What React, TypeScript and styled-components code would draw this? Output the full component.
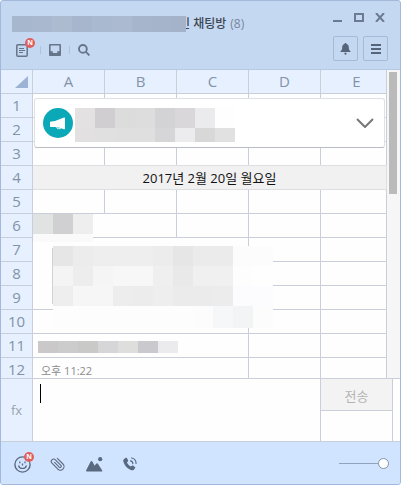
import React from "react";
import styled, { createGlobalStyle } from "styled-components";

const line = "#c8cfd8";

const GlobalStyle = createGlobalStyle`
  * { box-sizing: border-box; }
  body { margin: 0; font-family: "Open Sans", "Noto Sans CJK KR", sans-serif; }
  button { font: inherit; padding: 0; margin: 0; border: 0; background: none; color: inherit; }
`;

const Window = styled.main`
  height: 100vh;
  min-height: 320px;
  display: flex;
  flex-direction: column;
  border: 1px solid #a3b9dc;
  border-radius: 3px;
  background: #c5d8f1;
  overflow: hidden;
`;

const Header = styled.header`
  flex: none;
  height: 69px;
  padding: 7px 12px 0 11px;
  display: flex;
  justify-content: space-between;
  border-bottom: 1px solid #b7c9e2;
`;

const HeaderSide = styled.div<{ $end?: boolean }>`
  display: flex;
  flex-direction: column;
  align-items: ${(p) => (p.$end ? "flex-end" : "flex-start")};
  gap: ${(p) => (p.$end ? "10px" : "3px")};
  padding-top: ${(p) => (p.$end ? "0" : "5px")};
`;

const Title = styled.h1`
  margin: 0;
  height: 22px;
  display: flex;
  align-items: center;
  font-size: 12px;
  line-height: 22px;
  font-weight: 500;
  color: #3c4654;
  white-space: pre;
`;

const TitleMask = styled.span`
  position: relative;
  margin-right: -7px;
`;

const Count = styled.span`
  margin-left: 4px;
  font-weight: 400;
  color: #77869b;
`;

const Mosaic = styled.span<{ $columns: string; $rows: string }>`
  display: grid;
  width: max-content;
  grid-template-columns: ${(p) => p.$columns};
  grid-template-rows: ${(p) => p.$rows};
`;

const Tile = styled.span<{ $color: string }>`
  background: ${(p) => p.$color};
`;

const Tools = styled.div`
  display: flex;
  align-items: center;
  height: 24px;
`;

const ToolButton = styled.button<{ $flagged?: boolean }>`
  position: relative;
  width: ${(p) => (p.$flagged ? "28px" : "29px")};
  height: 24px;
  padding-right: ${(p) => (p.$flagged ? "8px" : "0")};
  display: flex;
  align-items: center;
  justify-content: center;
  color: #66758a;
`;

const Divider = styled.span`
  width: 1px;
  height: 8px;
  margin-right: -1px;
  background: #b0c2da;
`;

const Badge = styled.span`
  position: absolute;
  top: 0;
  right: 5px;
  width: 10px;
  height: 10px;
  border-radius: 50%;
  background: #e0605e;
  color: #ffffff;
  font-size: 7px;
  line-height: 10px;
  font-weight: 700;
  text-align: center;
`;

const WindowControls = styled.div`
  display: flex;
  gap: 5px;
  height: 18px;
`;

const ControlButton = styled.button`
  width: 16px;
  height: 18px;
  display: flex;
  align-items: center;
  justify-content: center;
  color: #6b7b92;
`;

const BoxButtons = styled.div`
  display: flex;
  gap: 5px;
`;

const BoxButton = styled.button`
  && { border: 1px solid #a5bad8; }
  width: 25px;
  height: 25px;
  border-radius: 2px;
  display: flex;
  align-items: center;
  justify-content: center;
  color: #56657a;
`;

const Chat = styled.section`
  flex: 1;
  min-height: 0;
  display: grid;
  grid-template-columns: minmax(0, 1fr) 13px;
  grid-template-rows: minmax(0, 1fr);
  background: #fefefe;
  overflow: hidden;
`;

const Sheet = styled.table`
  grid-area: 1 / 1;
  align-self: start;
  width: 100%;
  table-layout: fixed;
  border-collapse: separate;
  border-spacing: 0;
`;

const HeadCell = styled.th<{ $width?: string; $last?: boolean }>`
  width: ${(p) => p.$width ?? "auto"};
  height: 24px;
  padding: 0 0 0 ${(p) => (p.$last ? "6px" : "0")};
  border-right: 1px solid ${line};
  border-bottom: 1px solid ${line};
  background: #e6f0fe;
  color: #8293a9;
  font-size: 15px;
  line-height: 23px;
  font-weight: 400;
  text-align: center;
`;

const Corner = styled.svg`
  display: block;
  margin: 0 4px 0 auto;
`;

const Cell = styled.td`
  padding: 0;
  border-right: 1px solid ${line};
  border-bottom: 1px solid ${line};
`;

const Messages = styled.div`
  grid-area: 1 / 1;
  position: relative;
  min-width: 0;
  margin: 28px 0 0 32px;
  overflow: hidden;
`;

const Notice = styled.div`
  height: 50px;
  margin: 0 2px 0 1px;
  padding: 0 5px 0 8px;
  display: flex;
  align-items: center;
  background: #ffffff;
  border: 1px solid #dde0e4;
  border-bottom-color: #b9bdc2;
  border-radius: 3px;
`;

const NoticeText = styled.div`
  flex: 1;
  min-width: 0;
  margin-left: 2px;
  padding-top: 4px;
  overflow: hidden;
`;

const DateBar = styled.div`
  height: 25px;
  margin-top: 17px;
  border: 1px solid #dcdee1;
  border-left: 0;
  background: #f1f1f1;
  color: #111111;
  font-size: 13px;
  line-height: 24px;
  text-align: center;
`;

const Sender = styled.div`
  margin-top: 24px;
`;

const Bubble = styled.div`
  margin: 4px 0 0 19px;
  padding-left: 1px;
  background: linear-gradient(#d2d2d2, #d2d2d2) 0 2px / 1px 56px no-repeat;
`;

const Attachment = styled.div`
  margin: 13px 0 0 5px;
`;

const Time = styled.time`
  display: block;
  margin: 9px 0 0 8px;
  color: #8c8c8c;
  font-size: 11px;
  line-height: 18px;
`;

const Track = styled.div`
  grid-area: 1 / 2;
  padding: 2px 3px 0 2px;
  background: #f6f6f7;
`;

const Thumb = styled.div`
  height: 122px;
  background: #bababa;
`;

const Composer = styled.form`
  flex: none;
  height: 64px;
  display: grid;
  grid-template-columns: 32px minmax(0, 1fr) 73px 7px;
  border-top: 1px solid ${line};
  border-bottom: 1px solid ${line};
  background: #fefefe;
`;

const FxLabel = styled.label`
  display: flex;
  align-items: center;
  justify-content: center;
  border-right: 1px solid ${line};
  background: #e6f0fe;
  color: #98a3b2;
  font-size: 13px;
`;

const Input = styled.textarea`
  min-width: 0;
  padding: 5px 7px;
  border: 0;
  outline: 0;
  resize: none;
  background: transparent;
  color: #000000;
  font: 13px/20px "Open Sans", "Noto Sans CJK KR", sans-serif;
`;

const InputArea = styled.div`
  position: relative;
  display: grid;
`;

const Caret = styled.span`
  position: absolute;
  top: 5px;
  left: 7px;
  width: 1px;
  height: 19px;
  background: #000000;
`;

const SendColumn = styled.div`
  border: solid ${line};
  border-width: 0 1px;
`;

const SendButton = styled.button`
  && { border-bottom: 1px solid ${line}; }
  width: 100%;
  height: 32px;
  padding-top: 2px;
  display: block;
  background: #f3f3f3;
  color: #b3b3b3;
  font-size: 13px;
`;

const Footer = styled.footer`
  flex: none;
  height: 42px;
  padding: 0 11px 0 6px;
  display: flex;
  align-items: center;
  justify-content: space-between;
  background: #d0e3ff;
`;

const FooterTools = styled.div`
  display: flex;
  gap: 6px;
  padding-top: 2px;
`;

const FooterButton = styled(ToolButton)`
  width: 30px;
  height: 26px;
  color: #596a80;
`;

const FooterBadge = styled(Badge)`
  top: 1px;
  right: 3px;
`;

const Opacity = styled.input`
  appearance: none;
  width: 50px;
  height: 12px;
  margin: 0;
  background: linear-gradient(#8fa3bf, #8fa3bf) center / 100% 1px no-repeat;
  &::-webkit-slider-thumb {
    appearance: none;
    width: 11px;
    height: 11px;
    border: 1px solid #8494a9;
    border-radius: 50%;
    background: #ffffff;
  }
`;

const titleTiles = ["#a7b7ce", "#a9b8ce", "#adbbd0", "#a7b6cc", "#a9b9d0", "#abbad0", "#a6b5cb", "#a5b4ca", "#a4b3c9"];

const noticeTiles = [
  "#e3e1e2", "#d0ced0", "#dddcdd", "#dedddd", "#d3d2d5", "#d9d7d9", "#ebebed", "#fefefe",
  "#e2e0e1", "#e1e0e1", "#dfdfdf", "#e0dfe0", "#d6d5d7", "#ececee", "#d9d8d9", "#e1e1e1",
];

const senderTiles = ["#e1e2e2", "#d0cfd1", "#eeeeef", "#fafafb", "#fafafb", "#fafafb"];

const bubbleTiles = [
  "#e6e6e6", "#ececec", "#eeeeee", "#eeeeee", "#eeeeee", "#ececec", "#e6e6e6", "#ebebeb", "#ebebeb", "#fcfcfd", "#fcfcfd",
  "#f4f4f4", "#ededed", "#f5f5f5", "#f7f7f7", "#f7f7f7", "#efefef", "#e9e9e9", "#f0f0f0", "#f0f0f0", "#fdfdfe", "#fefefe",
  "#eeeeee", "#f6f6f6", "#f6f6f6", "#ededed", "#ececec", "#eeeeee", "#ebebeb", "#ebebeb", "#ececec", "#fcfcfe", "#fcfcfe",
  "#fdfdfe", "#fdfdfe", "#fdfdfe", "#fdfdfe", "#fdfdfe", "#fdfdfe", "#fdfdfe", "#fcfcfd", "#f6f7f8", "#f3f4f6", "#fcfcfd",
];

const attachmentTiles = ["#cac8c8", "#cccccc", "#c9c9c7", "#d6d5d7", "#dededd", "#cac9cd", "#ebebee"];

const Tiles = ({ colors, columns, rows }: { colors: string[]; columns: string; rows: string }) => (
  <Mosaic $columns={columns} $rows={rows} aria-hidden>
    {colors.map((c, i) => (
      <Tile key={i} $color={c} />
    ))}
  </Mosaic>
);

const NoteIcon = () => (
  <svg width="12" height="13" viewBox="0 0 12 13" fill="none" stroke="currentColor">
    <rect x="0.8" y="0.8" width="10.4" height="11.4" rx="1" strokeWidth="1.5" />
    <path d="M3 4.5h5M3 6.5h6M3 8.5h4" />
  </svg>
);

const TrayIcon = () => (
  <svg width="12" height="12" viewBox="0 0 12 12">
    <path fill="currentColor" fillRule="evenodd" d="M1 0h10a1 1 0 0 1 1 1v10a1 1 0 0 1-1 1H1a1 1 0 0 1-1-1V1a1 1 0 0 1 1-1zm.6 1.6v5.6h2.2v1.7h4.4V7.2h2.2V1.6z" />
  </svg>
);

const SearchIcon = () => (
  <svg width="12" height="12" viewBox="0 0 12 12" fill="none" stroke="currentColor" strokeWidth="1.9">
    <circle cx="4.9" cy="4.9" r="3.9" />
    <path d="M7.7 7.7l3.7 3.7" />
  </svg>
);

const BellIcon = () => (
  <svg width="11" height="12" viewBox="0 0 11 12" fill="currentColor">
    <path d="M5.5 0c.7 0 1 .4 1 1 1.7.5 2.3 1.9 2.3 3.5 0 2.200.5 2.900 1.700 3.700v.8H.5v-.8c1.200-.8 1.700-1.500 1.700-3.700C2.200 2.900 2.800 1.500 4.500 1c0-.6.300-1 1-1z" />
    <circle cx="5.5" cy="10.7" r="1.1" />
  </svg>
);

const MenuIcon = () => (
  <svg width="10" height="10" viewBox="0 0 10 10" stroke="currentColor" strokeWidth="2">
    <path d="M0 1h10M0 5h10M0 9h10" />
  </svg>
);

const MegaphoneIcon = () => (
  <svg width="30" height="30" viewBox="0 0 30 30" aria-hidden>
    <circle cx="15" cy="15" r="15" fill="#0ba9b8" />
    <path fill="#ffffff" d="M7 13.8l5-.9 9-3.4c.7-.2 1 0 1 .6v10.5c0 .6-.3.8-1 .6l-3.200-1c-.6 1.500-4 1.400-4.500-.9l-1.300-.4-5 .2z" />
    <path d="M14.3 19.2c.6 1.100 1.900 1.100 2.500.5" stroke="#0ba9b8" strokeWidth="0.8" fill="none" />
  </svg>
);

const SmileIcon = () => (
  <svg width="17" height="17" viewBox="0 0 17 17" fill="none" stroke="currentColor">
    <circle cx="8.5" cy="8.5" r="7.6" strokeWidth="1.4" />
    <path d="M4.5 9.500c1 4 7 4 8 0" strokeWidth="1.2" />
    <path d="M5.8 5.500v1.700M11 5.500v1.700M8.500 7.500v2" strokeWidth="1.3" />
  </svg>
);

const ClipIcon = () => (
  <svg width="16" height="16" viewBox="0 0 16 16" fill="none" stroke="currentColor" strokeWidth="1.1" strokeLinecap="round">
    <path
      transform="translate(8 8) rotate(45) translate(-9 -4.1)"
      d="M5.5 5.4H12a1.200 1.200 0 0 0 0-2.400H4.200a2.400 2.400 0 0 0 0 4.800H12.500a3.600 3.600 0 0 0 0-7.200H4.500"
    />
  </svg>
);

const PhotoIcon = () => (
  <svg width="17" height="15" viewBox="0 0 17 15" fill="currentColor">
    <path d="M.8 14.500c-.7 0-.9-.6-.6-1.200L4.500 4.700c.5-1 1.500-1 2 0l2.100 4.100 1.500-2c.5-.7 1.300-.7 1.800 0l4.200 6.500c.4.700.2 1.200-.5 1.200z" />
    <circle cx="14.2" cy="2.2" r="2.1" />
  </svg>
);

const PhoneIcon = () => (
  <svg width="14" height="14" viewBox="0 0 15 15">
    <path fill="currentColor" d="M1.200 2.200L3 .9c.5-.3.9-.2 1.200.3l1.300 2.500c.2.500.1.800-.3 1.100l-1 .8c.6 2 2.300 3.800 4.200 4.700l1-1c.4-.4.800-.4 1.200-.1l2.200 1.600c.5.400.5.800.1 1.300l-1.300 1.500c-.8.8-2 .8-3.300.3C4.400 12.500 1.500 9 .4 5.200 0 3.900.3 2.900 1.200 2.200z" />
    <path fill="none" stroke="currentColor" strokeWidth="1.200" strokeLinecap="round" d="M8 4.200c1.500.2 2.500 1.300 2.600 2.900M9.200 1c2.800.5 4.800 2.800 4.800 6" />
  </svg>
);

const columns = ["A", "B", "C", "D", "E"];

type Span = { cols?: number; rows?: number };

const plain: Span[] = [{}, {}, {}, {}, {}];
const message: Span[] = [{ cols: 3 }, {}, {}];

const sheetRows: Span[][] = [
  plain,
  plain,
  plain,
  [{ cols: 5 }],
  plain,
  [{ cols: 2 }, {}, {}, {}],
  [{ cols: 3, rows: 3 }, {}, {}],
  [{}, {}],
  [{}, {}],
  message,
  message,
  message,
];

export default function App() {
  return (
    <>
      <GlobalStyle />
      <Window>
        <Header>
          <HeaderSide>
            <Title>
              <TitleMask>
                <Tiles colors={titleTiles} columns="repeat(8, 20px) 14px" rows="16px" />
              </TitleMask>
              <span>인 채팅방</span>
              <Count>(8)</Count>
            </Title>
            <Tools>
              <ToolButton $flagged aria-label="Notes"><NoteIcon /><Badge>N</Badge></ToolButton>
              <Divider />
              <ToolButton aria-label="Drawer"><TrayIcon /></ToolButton>
              <Divider />
              <ToolButton aria-label="Search"><SearchIcon /></ToolButton>
            </Tools>
          </HeaderSide>
          <HeaderSide $end>
            <WindowControls>
              <ControlButton aria-label="Minimize">
                <svg width="10" height="9" stroke="currentColor" strokeWidth="2"><path d="M0 8h9" /></svg>
              </ControlButton>
              <ControlButton aria-label="Maximize">
                <svg width="10" height="9" stroke="currentColor" fill="none" strokeWidth="2"><path d="M1 1h8v7H1z" /></svg>
              </ControlButton>
              <ControlButton aria-label="Close">
                <svg width="10" height="9" stroke="currentColor" strokeWidth="2"><path d="M1 0l8 9M9 0L1 9" /></svg>
              </ControlButton>
            </WindowControls>
            <BoxButtons>
              <BoxButton aria-label="Notifications"><BellIcon /></BoxButton>
              <BoxButton aria-label="Menu"><MenuIcon /></BoxButton>
            </BoxButtons>
          </HeaderSide>
        </Header>

        <Chat>
          <Sheet>
            <thead>
              <tr>
                <HeadCell $width="32px" aria-label="Select all">
                  <Corner width="13" height="12" viewBox="0 0 13 12"><path d="M13 0v12H0z" fill="#9db3d6" /></Corner>
                </HeadCell>
                {columns.map((c) => (
                  <HeadCell key={c} scope="col" $last={c === "E"} $width={c === "E" ? undefined : "72px"}>{c}</HeadCell>
                ))}
              </tr>
            </thead>
            <tbody>
              {sheetRows.map((cells, r) => (
                <tr key={r}>
                  <HeadCell scope="row">{r + 1}</HeadCell>
                  {cells.map((cell, i) => <Cell key={i} colSpan={cell.cols} rowSpan={cell.rows} />)}
                </tr>
              ))}
            </tbody>
          </Sheet>
          <Messages>
            <Notice>
              <MegaphoneIcon />
              <NoticeText>
                <Tiles colors={noticeTiles} columns="repeat(8, 20px)" rows="20px 14px" />
              </NoticeText>
              <ToolButton aria-label="Expand notice">
                <svg width="18" height="10" viewBox="0 0 18 10" fill="none" stroke="#777777" strokeWidth="2"><path d="M1 1l8 8 8-8" /></svg>
              </ToolButton>
            </Notice>
            <DateBar>2017년 2월 20일 월요일</DateBar>
            <Sender>
              <Tiles colors={senderTiles} columns="20px 20px 20px" rows="20px 8px" />
            </Sender>
            <Bubble>
              <Tiles colors={bubbleTiles} columns="repeat(11, 20px)" rows="20px 20px 20px 22px" />
            </Bubble>
            <Attachment>
              <Tiles colors={attachmentTiles} columns="repeat(7, 20px)" rows="12px" />
            </Attachment>
            <Time>오후 11:22</Time>
          </Messages>
          <Track><Thumb /></Track>
        </Chat>

        <Composer onSubmit={(e) => e.preventDefault()}>
          <FxLabel htmlFor="message">fx</FxLabel>
          <InputArea>
            <Input id="message" />
            <Caret />
          </InputArea>
          <SendColumn><SendButton type="submit">전송</SendButton></SendColumn>
        </Composer>

        <Footer>
          <FooterTools>
            <FooterButton aria-label="Emoticons"><SmileIcon /><FooterBadge>N</FooterBadge></FooterButton>
            <FooterButton aria-label="Attach file"><ClipIcon /></FooterButton>
            <FooterButton aria-label="Send photo"><PhotoIcon /></FooterButton>
            <FooterButton aria-label="Call"><PhoneIcon /></FooterButton>
          </FooterTools>
          <Opacity type="range" aria-label="Opacity" min={0} max={100} defaultValue={100} />
        </Footer>
      </Window>
    </>
  );
}
